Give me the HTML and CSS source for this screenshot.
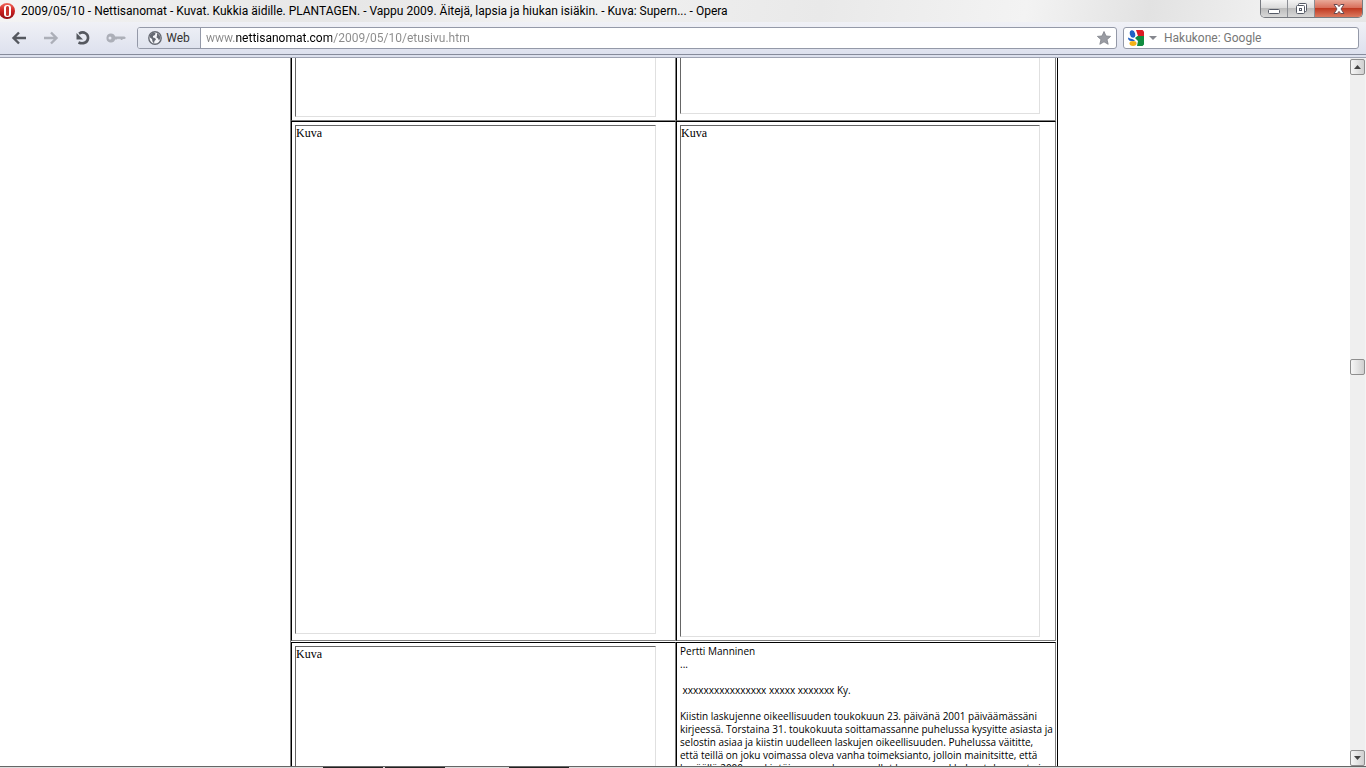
FILE: index.html
```html
<!DOCTYPE html>
<html lang="fi">
<head>
  <meta charset="UTF-8">
  <meta name="viewport" content="width=device-width, initial-scale=1.0">
  <title>2009/05/10 - Nettisanomat</title>
  <link rel="stylesheet" href="styles.css">
</head>
<body>
<header class="title-bar">
  <svg class="opera-icon" width="15" height="18" viewBox="0 0 15 18">
    <defs>
      <linearGradient id="red" x1="0" y1="0" x2="0" y2="1">
        <stop offset="0" stop-color="#f0695c"/>
        <stop offset="0.5" stop-color="#cc2222"/>
        <stop offset="1" stop-color="#8e0b10"/>
      </linearGradient>
    </defs>
    <ellipse cx="7" cy="9" rx="8" ry="8" fill="url(#red)"/>
    <rect x="4" y="3" width="7" height="12" rx="3" fill="#fff"/>
    <rect x="6" y="4" width="3" height="10" rx="1.5" fill="#c8322c"/>
  </svg>
  <h1 class="window-title">2009/05/10 - Nettisanomat - Kuvat. Kukkia äidille. PLANTAGEN. - Vappu 2009. Äitejä, lapsia ja hiukan isiäkin. - Kuva: Supern... - Opera</h1>
  <div class="window-buttons">
    <button class="win-btn win-min" aria-label="Minimize">
      <svg width="14" height="8" viewBox="0 0 14 8"><rect x="1.5" y="2.5" width="11" height="4" rx="1" fill="#fff" stroke="#555a66"/></svg>
    </button>
    <button class="win-btn win-max" aria-label="Restore">
      <svg width="13" height="13" viewBox="0 0 13 13" fill="#fff" stroke="#555a66"><rect x="3.5" y="1.5" width="8" height="8" rx="1"/><rect x="1.5" y="3.5" width="8" height="8" rx="1"/><rect x="4.5" y="6.5" width="2" height="2"/></svg>
    </button>
    <button class="win-btn win-close" aria-label="Close">
      <svg width="14" height="12" viewBox="0 0 14 12"><path d="M2 1.500h3.300L7 3.600l1.700-2.100H12L9 6l3 4.500H8.700L7 8.400l-1.700 2.100H2L5 6z" fill="#fff" stroke="#6b4a50"/></svg>
    </button>
  </div>
</header>

<nav class="toolbar">
  <button class="nav-btn" aria-label="Back">
    <svg width="16" height="16" viewBox="0 0 16 16" fill="none" stroke="#55585f" stroke-width="2.4"><path d="M15 8H3M8 2.500L2.500 8L8 13.500"/></svg>
  </button>
  <button class="nav-btn" aria-label="Forward">
    <svg width="16" height="16" viewBox="0 0 16 16" fill="none" stroke="#acafb8" stroke-width="2.4"><path d="M1 8h12M8 2.500L13.500 8L8 13.500"/></svg>
  </button>
  <button class="nav-btn" aria-label="Reload">
    <svg width="16" height="16" viewBox="0 0 16 16"><path d="M4 3.600C9 .6 13.500 4 13 8.500C12.500 12.500 8 14.500 3.500 12.500" fill="none" stroke="#55585f" stroke-width="2.6"/><path d="M1.500 9.500V3L8 9.500z" fill="#55585f"/></svg>
  </button>
  <button class="nav-btn nav-key" aria-label="Password">
    <svg width="20" height="12" viewBox="0 0 20 12"><path d="M5 1.500a4.500 4.500 0 1 0 4.200 6H11l1-1 1 1 1-1 1 1.500h1l1-1h1.500L20 6 18.500 4.500H9.200A4.500 4.500 0 0 0 5 1.500zM4 4.500a1.500 1.500 0 1 1 0 3 1.500 1.500 0 0 1 0-3z" fill="#acafb8" fill-rule="evenodd"/></svg>
  </button>

  <form class="address-bar">
    <button type="button" class="web-badge">
      <svg width="14" height="14" viewBox="0 0 14 14"><circle cx="7" cy="7" r="6.200" fill="#f5f6fa" stroke="#666a73" stroke-width="1.4"/><path d="M2 4l3-2.500 2.500.5-.5 2-2 1v1.500l2 .5 1 1.500-1.500 1.500-.5 2.500-1.500-2L4 8 2 6.500zM9 2l2.500 2 1 3-1.500 2.500-1-2-1.500-1L9 4.500z" fill="#666a73"/></svg>
      <span>Web</span>
    </button>
    <input type="text" class="address-input" aria-label="Address" value="www.nettisanomat.com/2009/05/10/etusivu.htm">
    <button type="button" class="star-btn" aria-label="Bookmark">
      <svg width="14" height="14" viewBox="0 0 14 14"><path d="M7 .5l2 4.500 4.600.4L10 8.600l1.200 4.700L7 10.800l-4.200 2.500L4 8.600.4 5.400 5 5z" fill="#9a9ca3" stroke="#7e8088" stroke-width=".8"/></svg>
    </button>
  </form>

  <form class="search-bar">
    <button type="button" class="engine-btn" aria-label="Search engine">
      <svg width="16" height="16" viewBox="0 0 16 16">
        <path d="M8 0h6.500L16 1.500V6H10z" fill="#dd1c26"/>
        <path d="M9.500 6H16v8.500L14.500 16H9l1-5-3-3z" fill="#118c40"/>
        <ellipse cx="4.500" cy="4" rx="2.600" ry="3.800" fill="#2160c4" transform="rotate(-15 4.500 4)"/>
        <path d="M0 7.500c3 2 5.500 1 7 3.500H3C1 11 0 9.500 0 7.500z" fill="#2160c4"/>
        <ellipse cx="5" cy="13.500" rx="3.500" ry="2.400" fill="#f5b218"/>
      </svg>
      <svg width="8" height="4" viewBox="0 0 8 4"><path d="M0 0h8L4 4z" fill="#85878e"/></svg>
    </button>
    <input type="text" class="search-input" aria-label="Search" placeholder="Hakukone: Google">
  </form>
</nav>

<div class="viewport">
  <main class="page">
    <table class="photos">
      <colgroup>
        <col class="col-left">
        <col class="col-right">
      </colgroup>
      <tbody>
        <tr class="cut-row">
          <td><div class="photo end-left"></div></td>
          <td><div class="photo end-right"></div></td>
        </tr>
        <tr>
          <td><div class="photo full-left">Kuva</div></td>
          <td><div class="photo full-right">Kuva</div></td>
        </tr>
        <tr class="gap"><td colspan="2"></td></tr>
        <tr>
          <td><div class="photo full-left">Kuva</div></td>
          <td class="letter">
            <p>Pertti Manninen<br>...</p>
            <p>&nbsp;xxxxxxxxxxxxxxxx xxxxx xxxxxxx Ky.</p>
            <p>Kiistin laskujenne oikeellisuuden toukokuun 23. päivänä 2001 päiväämässäni<br>
            kirjeessä. Torstaina 31. toukokuuta soittamassanne puhelussa kysyitte asiasta ja<br>
            selostin asiaa ja kiistin uudelleen laskujen oikeellisuuden. Puhelussa väititte,<br>
            että teillä on joku voimassa oleva vanha toimeksianto, jolloin mainitsitte, että<br>
            keväällä 2000 merkintöjenne mukaan on ollut kysymys pakkohuutokaupasta ja</p>
          </td>
        </tr>
      </tbody>
    </table>
  </main>
  <div class="scrollbar">
    <button class="scroll-btn" aria-label="Scroll up"><svg width="7" height="4" viewBox="0 0 7 4"><path d="M0 4h7L3.500 0z" fill="#444"/></svg></button>
    <div class="scroll-thumb"></div>
    <button class="scroll-btn" aria-label="Scroll down"><svg width="7" height="4" viewBox="0 0 7 4"><path d="M0 0h7L3.500 4z" fill="#444"/></svg></button>
  </div>
</div>
<footer class="bottom-edge"><i></i><i></i><i class="far"></i></footer>
</body>
</html>
```
FILE: styles.css
```css
* {
  margin: 0;
  padding: 0;
  box-sizing: border-box;
}

body {
  display: flex;
  flex-direction: column;
  height: 100vh;
  overflow: hidden;
  background: #fff;
  color: #000;
  font-family: Roboto, "Open Sans", sans-serif;
  font-size: 12px;
}

button {
  border: none;
  background: none;
  font: inherit;
  display: flex;
  align-items: center;
  justify-content: center;
}

svg {
  display: block;
  flex: none;
}

/* title bar */
.title-bar {
  display: flex;
  height: 22px;
  gap: 6px;
  padding-right: 3px;
  background: linear-gradient(100deg, #f4f4f4 0%, #e6e6e6 25%, #f2f2f2 40%, #e9e9e9 60%, #f3f3f3 75%, #e2e2e2 84%, #efefef 92%, #e6e6e6 100%);
}

.opera-icon {
  margin-top: 2px;
}

.window-title {
  flex: 1;
  min-width: 0;
  overflow: hidden;
  white-space: nowrap;
  font-size: 12px;
  font-weight: normal;
  line-height: 22px;
}

.window-buttons {
  display: flex;
  height: 18px;
  border: 1px solid #777a80;
  border-top: none;
  border-radius: 0 0 5px 5px;
  overflow: hidden;
}

.win-btn {
  width: 27px;
  border-right: 1px solid #8b8e94;
  background: linear-gradient(#f4f4f4, #dcdcdc 45%, #bcbcbc 50%, #d8d8d8);
}

.win-min svg {
  margin-top: 4px;
}

.win-close {
  width: 47px;
  border-right: none;
  background: linear-gradient(#e9a999, #d9705c 45%, #c03a22 50%, #dc7a60);
}

/* toolbar */
.toolbar {
  display: flex;
  align-items: center;
  height: 33px;
  padding: 0 7px 0 11px;
  border-bottom: 1px solid #868b9b;
  background: linear-gradient(#f0f1f6, #dde1ee);
}

.nav-btn {
  width: 16px;
  height: 22px;
  margin-right: 16px;
}

.nav-key {
  width: 20px;
  margin-left: -1px;
  margin-right: 11px;
}

.address-bar,
.search-bar {
  display: flex;
  align-items: center;
  height: 22px;
  border: 1px solid #9499a8;
  border-radius: 3px;
  background: #fff;
  overflow: hidden;
}

.address-bar {
  flex: 1;
  margin-right: 6px;
}

.web-badge {
  width: 63px;
  height: 20px;
  gap: 4px;
  border-right: 1px solid #9499a8;
  background: linear-gradient(#eceef5, #dfe3ee);
  color: #333;
}

.address-input,
.search-input {
  flex: 1;
  min-width: 0;
  height: 20px;
  border: none;
  outline: none;
  background: none;
  font: inherit;
}

/* the domain stays black, the rest of the address is grey */
.address-input {
  padding-left: 5px;
  background: linear-gradient(90deg, #8a8a8a 35px, #000 35px, #000 131px, #8a8a8a 131px);
  -webkit-background-clip: text;
  background-clip: text;
  color: transparent;
}

.star-btn {
  width: 24px;
}

.search-bar {
  width: 236px;
}

.engine-btn {
  gap: 5px;
  padding: 0 7px 0 4px;
}

.search-input::placeholder {
  color: #777;
}

/* page area */
.viewport {
  display: flex;
  flex: 1;
  min-height: 0;
  border-top: 1px solid #9ea3b2;
  box-shadow: 0 -2px #dde1ee;
  margin-top: 2px;
}

.page {
  flex: 1;
  overflow: hidden;
}

.photos {
  width: 768px;
  margin: 0 auto;
  table-layout: fixed;
  border-collapse: separate;
  border-spacing: 0;
  border-left: 1px solid #808080;
  border-right: 1px solid #000;
  padding-right: 1px;
  font-family: "Liberation Serif", "Times New Roman", serif;
  font-size: 12px;
  line-height: 14px;
}

.col-left {
  width: 385px;
}

.col-right {
  width: 380px;
}

.photos td {
  padding: 3px;
  vertical-align: top;
  border: 1px solid;
  border-color: #000 #808080 #808080 #000;
}

.photos .cut-row td {
  border-top: none;
  padding-top: 0;
}

.photos .gap td {
  height: 1px;
  padding: 0;
  border: none;
}

.photo {
  border: 1px solid;
  border-color: #666 #e0e0e0 #e0e0e0 #666;
}

.end-left,
.full-left {
  width: 361px;
}

.end-right,
.full-right {
  width: 360px;
}

.end-left {
  height: 59px;
  border-top: none;
}

.end-right {
  height: 56px;
  border-top: none;
}

.full-left {
  height: 509px;
}

.full-right {
  height: 512px;
}

.photos .letter {
  padding-top: 2px;
  font-family: "Open Sans", "Liberation Sans", sans-serif;
  font-size: 10px;
  line-height: 13px;
  white-space: nowrap;
}

.letter p {
  margin-bottom: 13px;
}

/* scrollbar */
.scrollbar {
  display: flex;
  flex-direction: column;
  justify-content: space-between;
  width: 18px;
  padding-top: 1px;
  border-left: 2px solid #fff;
  border-right: 1px solid #f4f4f4;
  background: #efefef;
}

.scroll-btn,
.scroll-thumb {
  height: 16px;
  border: 1px solid #8e8e8e;
  border-radius: 2px;
  background: linear-gradient(90deg, #f6f6f6, #e4e4e4 50%, #cfcfcf);
}

.scroll-thumb {
  margin-bottom: 92px;
}

/* window edge with the tops of taskbar buttons */
.bottom-edge {
  display: flex;
  height: 2px;
  gap: 2px;
  padding-left: 323px;
  border-top: 1px solid #666;
  background: #ddd;
}

.bottom-edge i {
  width: 60px;
  background: #222;
}

.bottom-edge .far {
  margin-left: 62px;
}
```
